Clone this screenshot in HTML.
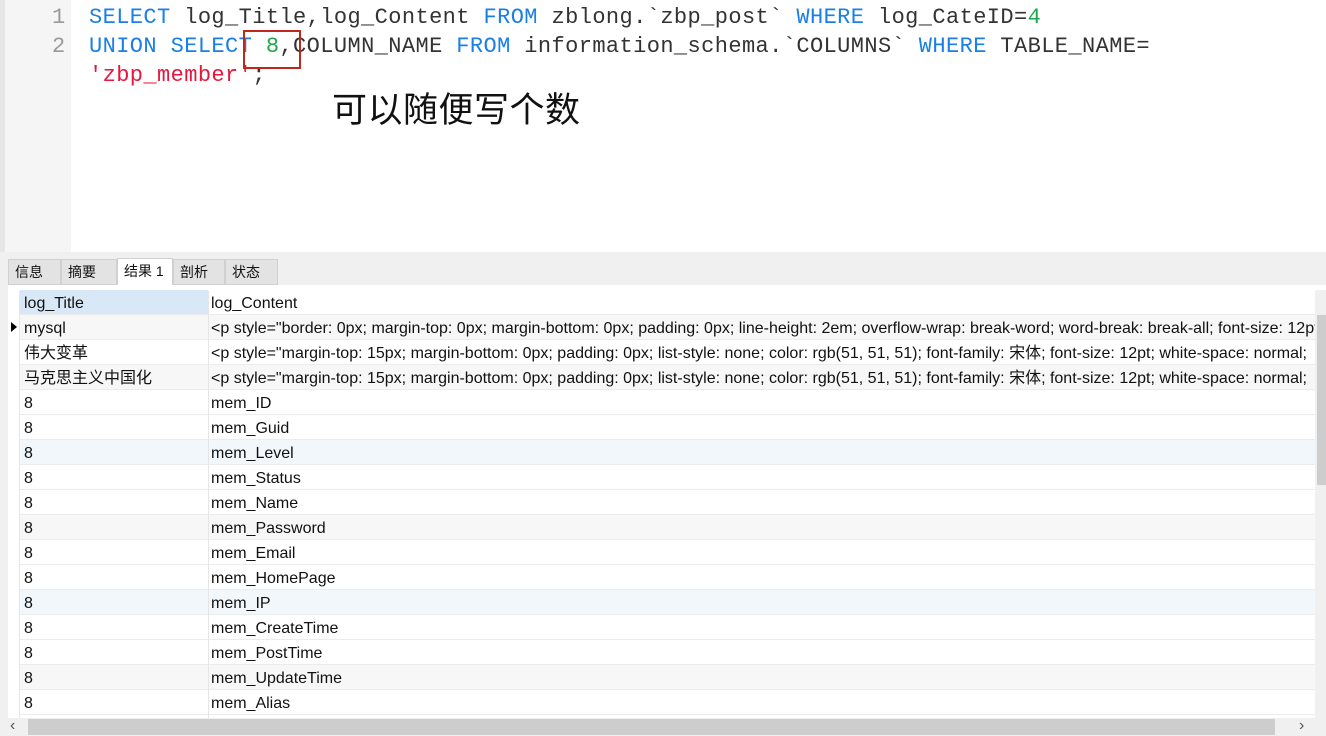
<!DOCTYPE html>
<html><head><meta charset="utf-8"><style>
*{margin:0;padding:0;box-sizing:border-box}
body{width:1326px;height:736px;overflow:hidden;background:#f0f0f0;position:relative;font-family:"Liberation Sans","Noto Sans CJK SC",sans-serif}
#ed{position:absolute;left:0;top:0;width:1326px;height:252px;background:#fff}
#lsb{position:absolute;left:0;top:0;width:5px;height:252px;background:#e6e6e6}
#gut{position:absolute;left:5px;top:0;width:66px;height:252px;background:#f5f5f5}
.ln{position:absolute;left:40px;font:22px "Liberation Mono",monospace;color:#999;line-height:29px}
.code{position:absolute;left:89px;font:22px "Liberation Mono",monospace;letter-spacing:0.4px;color:#333;line-height:29px;white-space:pre}
.k{color:#1a7fe6}.n{color:#1aa84a}.s{color:#e8163c}
#box{position:absolute;left:243px;top:30px;width:58px;height:39px;border:2px solid #c0281c}
#note{position:absolute;left:332px;top:82px;font:35px "Noto Sans CJK SC",sans-serif;color:#111;letter-spacing:0.5px}
#tabs{position:absolute;left:8px;top:258px;height:27px}
.tab{position:absolute;top:1px;height:26px;background:#e3e3e3;border:1px solid #d0d0d0;font-size:14px;line-height:24px;padding-left:6px;color:#111}
.tab.a{background:#fff;top:0;height:28px;border-bottom:none}
#grid{position:absolute;left:8px;top:285px;width:1318px;height:433px;background:#fff}
.row{position:absolute;left:12px;width:1295px;height:25px;border-bottom:1px solid #ececec;font-size:16px;line-height:27px;color:#111;white-space:nowrap;overflow:hidden}
.c1{position:absolute;left:4px;top:0}
.c2{position:absolute;left:191px;top:0}
.vl{position:absolute;top:6px;left:200px;width:1px;height:427px;background:#e6e6e6}
</style></head><body>
<div id="ed"></div><div id="lsb"></div><div id="gut"></div>
<div class="ln" style="top:3px;left:52px">1</div>
<div class="ln" style="top:32px;left:52px">2</div>
<div class="code" style="top:3px"><span class="k">SELECT</span> log_Title,log_Content <span class="k">FROM</span> zblong.`zbp_post` <span class="k">WHERE</span> log_CateID=<span class="n">4</span></div>
<div class="code" style="top:32px"><span class="k">UNION SELECT</span> <span class="n">8</span>,COLUMN_NAME <span class="k">FROM</span> information_schema.`COLUMNS` <span class="k">WHERE</span> TABLE_NAME=</div>
<div class="code" style="top:61px"><span class="s">'zbp_member'</span>;</div>
<div id="box"></div>
<div id="note">可以随便写个数</div>
<div id="tabs">
<div class="tab" style="left:0;width:53px">信息</div>
<div class="tab" style="left:53px;width:56px">摘要</div>
<div class="tab a" style="left:109px;width:56px">结果 1</div>
<div class="tab" style="left:165px;width:52px">剖析</div>
<div class="tab" style="left:217px;width:53px">状态</div>
</div>
<div id="grid">
<div style="position:absolute;left:12px;top:5px;width:188px;height:25px;background:#d9e8f6"></div>
<div class="row" style="top:5px;background:transparent"><span class="c1">log_Title</span><span class="c2">log_Content</span></div>
<div class="row" style="top:30px;background:#f7f7f7"><span class="c1">mysql</span><span class="c2">&lt;p style="border: 0px; margin-top: 0px; margin-bottom: 0px; padding: 0px; line-height: 2em; overflow-wrap: break-word; word-break: break-all; font-size: 12pt;</span></div>
<div class="row" style="top:55px"><span class="c1">伟大变革</span><span class="c2">&lt;p style="margin-top: 15px; margin-bottom: 0px; padding: 0px; list-style: none; color: rgb(51, 51, 51); font-family: 宋体; font-size: 12pt; white-space: normal;</span></div>
<div class="row" style="top:80px;background:#f7f7f7"><span class="c1">马克思主义中国化</span><span class="c2">&lt;p style="margin-top: 15px; margin-bottom: 0px; padding: 0px; list-style: none; color: rgb(51, 51, 51); font-family: 宋体; font-size: 12pt; white-space: normal;</span></div>
<div class="row" style="top:105px"><span class="c1">8</span><span class="c2">mem_ID</span></div>
<div class="row" style="top:130px"><span class="c1">8</span><span class="c2">mem_Guid</span></div>
<div class="row" style="top:155px;background:#f2f7fc"><span class="c1">8</span><span class="c2">mem_Level</span></div>
<div class="row" style="top:180px"><span class="c1">8</span><span class="c2">mem_Status</span></div>
<div class="row" style="top:205px"><span class="c1">8</span><span class="c2">mem_Name</span></div>
<div class="row" style="top:230px;background:#f7f7f7"><span class="c1">8</span><span class="c2">mem_Password</span></div>
<div class="row" style="top:255px"><span class="c1">8</span><span class="c2">mem_Email</span></div>
<div class="row" style="top:280px"><span class="c1">8</span><span class="c2">mem_HomePage</span></div>
<div class="row" style="top:305px;background:#f2f7fc"><span class="c1">8</span><span class="c2">mem_IP</span></div>
<div class="row" style="top:330px"><span class="c1">8</span><span class="c2">mem_CreateTime</span></div>
<div class="row" style="top:355px"><span class="c1">8</span><span class="c2">mem_PostTime</span></div>
<div class="row" style="top:380px;background:#f7f7f7"><span class="c1">8</span><span class="c2">mem_UpdateTime</span></div>
<div class="row" style="top:405px"><span class="c1">8</span><span class="c2">mem_Alias</span></div>
<div class="vl"></div>
<div style="position:absolute;left:11px;top:6px;width:1px;height:427px;background:#e6e6e6"></div>
<div style="position:absolute;left:3px;top:37px;width:0;height:0;border-left:6px solid #000;border-top:5px solid transparent;border-bottom:5px solid transparent"></div>
<div style="position:absolute;left:1307px;top:5px;width:11px;height:428px;background:#f0f0f0"></div>
<div style="position:absolute;left:1309px;top:30px;width:9px;height:170px;background:#cdcdcd"></div>
</div>
<div style="position:absolute;left:0;top:718px;width:1326px;height:18px;background:#f0f0f0"></div>
<div style="position:absolute;left:28px;top:719px;width:1247px;height:16px;background:#cdcdcd"></div>
<div style="position:absolute;left:10px;top:717px;font-size:16px;color:#555">‹</div>
<div style="position:absolute;left:1299px;top:717px;font-size:16px;color:#555">›</div>
</body></html>
